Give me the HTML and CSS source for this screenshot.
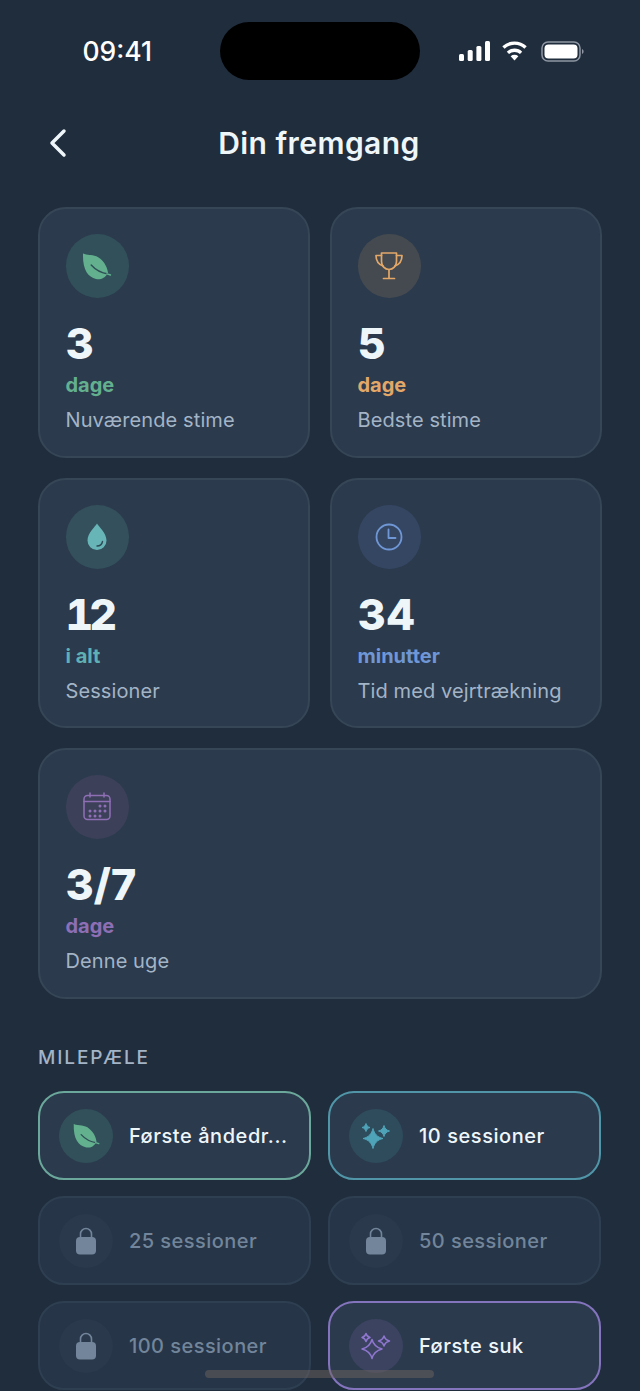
FILE: index.html
```html
<!DOCTYPE html>
<html lang="da">
<head>
  <meta charset="UTF-8" />
  <meta name="viewport" content="width=device-width, initial-scale=1.0"/>
  <title>Din fremgang</title>
  <link rel="stylesheet" href="styles.css">
</head>
<body>
  <div class="screen">
    <div class="status-bar">
      <span class="time">09:41</span>
      <div class="island"></div>
      <div class="status-icons">
        <svg class="signal" width="31" height="20" viewBox="0 0 31 20"><rect x="0" y="13" width="5" height="7" rx="1.5"/><rect x="8.700" y="9" width="5" height="11" rx="1.5"/><rect x="17.400" y="5" width="5" height="15" rx="1.5"/><rect x="26" y="0" width="5" height="20" rx="1.5"/></svg>
        <svg class="wifi" width="25" height="20" viewBox="0 0 26 20"><path d="M13 20l-4-4.600a6 6 0 0 1 8 0z"/><path d="M13 7.500c3.200 0 6 1.200 8 3.200l-2.300 2.500a8.300 8.300 0 0 0-11.400 0L5 10.700c2-2 4.800-3.200 8-3.200z"/><path d="M13 0c4.900 0 9.400 1.900 12.700 5.100l-2.400 2.600A15 15 0 0 0 13 3.500 15 15 0 0 0 2.700 7.700L.3 5.100A18.300 18.300 0 0 1 13 0z"/></svg>
        <svg width="43" height="21" viewBox="0 0 43 21"><rect x="1" y="1" width="38" height="19" rx="6" fill="none" stroke="#8e97a3" stroke-width="1.500"/><rect x="3.500" y="3.500" width="33" height="14" rx="4"/><path d="M41 8v5c1-.4 1.600-1.400 1.600-2.500S42 8.400 41 8z" fill="#8e97a3"/></svg>
      </div>
    </div>

    <header class="top-bar">
      <svg class="back" width="20" height="30" viewBox="0 0 20 30"><path d="M16 3L4 15l12 12" fill="none" stroke="#eef6fa" stroke-width="3.500" stroke-linecap="round" stroke-linejoin="round"/></svg>
      <h1>Din fremgang</h1>
    </header>

    <section class="stats">
      <div class="card">
        <div class="circle c-green">
          <svg width="34" height="34" viewBox="0 0 34 34"><path d="M3 4.500C9 7 15 5 20 9.500c5 4 7.500 9.500 8 14.500-3 5.500-8 7-12 6C8 28 2.500 21 3 4.500z" fill="#63b08f"/><path d="M11.200 16c4 4.500 10 8 17 9" fill="none" stroke="#2f4f56" stroke-width="1.400" stroke-linecap="round"/><path d="M27 24.800l3.500 1.200" stroke="#63b08f" stroke-width="1.400" stroke-linecap="round"/></svg>
        </div>
        <div class="num">3</div>
        <div class="unit green">dage</div>
        <div class="label">Nuværende stime</div>
      </div>
      <div class="card">
        <div class="circle c-orange">
          <svg width="30" height="30" viewBox="0 0 30 30" fill="none" stroke="#e3a868" stroke-width="1.700" stroke-linejoin="round" stroke-linecap="round"><path d="M7.500 2h15v8.500c0 4.500-3.300 8-7.500 8s-7.500-3.500-7.500-8z"/><path d="M7.500 4.500H2c0 5 1.800 8.500 7 10.500M22.500 4.500H28c0 5-1.800 8.500-7 10.500"/><path d="M15 18.500V27M9.500 27.500h11"/></svg>
        </div>
        <div class="num">5</div>
        <div class="unit orange">dage</div>
        <div class="label">Bedste stime</div>
      </div>
      <div class="card">
        <div class="circle c-teal">
          <svg width="24" height="30" viewBox="0 0 24 30"><path d="M12 1.500c1.500 3 9.500 9.500 9.500 17a9.500 9.500 0 0 1-19 0c0-7.500 8-14 9.500-17z" fill="#68b5b8"/><path d="M12 24c3 0 5-1.800 5.500-4.500" fill="none" stroke="#2c4a55" stroke-width="1.400" stroke-linecap="round"/></svg>
        </div>
        <div class="num num-tab">12</div>
        <div class="unit teal">i alt</div>
        <div class="label">Sessioner</div>
      </div>
      <div class="card">
        <div class="circle c-blue">
          <svg width="30" height="30" viewBox="0 0 30 30" fill="none" stroke="#6f97d6" stroke-width="1.800" stroke-linecap="round" stroke-linejoin="round"><circle cx="15" cy="15" r="12.500"/><path d="M14.500 7.500V16h7"/></svg>
        </div>
        <div class="num">34</div>
        <div class="unit blue">minutter</div>
        <div class="label">Tid med vejrtrækning</div>
      </div>
      <div class="card wide">
        <div class="circle c-purple">
          <svg width="30" height="30" viewBox="0 0 30 30" fill="none" stroke="#8e6fb5" stroke-width="1.500" stroke-linecap="round"><rect x="2" y="3.500" width="26" height="24" rx="3.500"/><path d="M2 9.500h26M8 1v4M22 1v4"/><g fill="#8e6fb5" stroke="none"><circle cx="18" cy="14" r="1.500"/><circle cx="23" cy="14" r="1.500"/><circle cx="8" cy="19" r="1.500"/><circle cx="13" cy="19" r="1.500"/><circle cx="18" cy="19" r="1.500"/><circle cx="23" cy="19" r="1.500"/><circle cx="8" cy="24" r="1.500"/><circle cx="13" cy="24" r="1.500"/><circle cx="18" cy="24" r="1.500"/></g></svg>
        </div>
        <div class="num">3/7</div>
        <div class="unit purple">dage</div>
        <div class="label">Denne uge</div>
      </div>
    </section>

    <h2 class="section-title">MILEPÆLE</h2>

    <section class="milestones">
      <div class="mile done-green">
        <div class="mile-icon c-green">
          <svg width="31" height="31" viewBox="0 0 34 34"><path d="M3 4.500C9 7 15 5 20 9.500c5 4 7.500 9.500 8 14.500-3 5.500-8 7-12 6C8 28 2.500 21 3 4.500z" fill="#63b08f"/><path d="M11.200 16c4 4.500 10 8 17 9" fill="none" stroke="#2f4f56" stroke-width="1.400" stroke-linecap="round"/><path d="M27 24.800l3.500 1.200" stroke="#63b08f" stroke-width="1.400" stroke-linecap="round"/></svg>
        </div>
        <span class="mile-text">Første åndedr...</span>
      </div>
      <div class="mile done-teal">
        <div class="mile-icon c-cyan">
          <svg width="32" height="32" viewBox="0 0 32 32" fill="#4fa3b8" stroke="#4fa3b8" stroke-width="1" stroke-linejoin="round"><path d="M13 8.500c1.200 5 4.200 8.800 10 10-5.800 1.200-8.800 5-10 10-1.200-5-4.200-8.800-10-10 5.800-1.200 8.800-5 10-10z"/><path d="M6 3.500c.6 2.200 1.800 3.400 4 4-2.200.6-3.400 1.800-4 4-.6-2.200-1.800-3.400-4-4 2.200-.6 3.400-1.800 4-4z"/><path d="M24 5.500c.8 2.800 2.200 4.700 5.500 5.500-3.300.8-4.700 2.700-5.500 5.500-.8-2.800-2.200-4.700-5.500-5.500 3.300-.8 4.700-2.700 5.500-5.500z"/></svg>
        </div>
        <span class="mile-text">10 sessioner</span>
      </div>
      <div class="mile locked">
        <div class="mile-icon">
          <svg width="22" height="28" viewBox="0 0 22 28"><path d="M5.500 11V7a5.500 5.500 0 0 1 11 0v4" fill="none" stroke="#72859a" stroke-width="1.600"/><rect x="1" y="10" width="20" height="17.500" rx="4" fill="#72859a"/></svg>
        </div>
        <span class="mile-text">25 sessioner</span>
      </div>
      <div class="mile locked">
        <div class="mile-icon">
          <svg width="22" height="28" viewBox="0 0 22 28"><path d="M5.500 11V7a5.500 5.500 0 0 1 11 0v4" fill="none" stroke="#72859a" stroke-width="1.600"/><rect x="1" y="10" width="20" height="17.500" rx="4" fill="#72859a"/></svg>
        </div>
        <span class="mile-text">50 sessioner</span>
      </div>
      <div class="mile locked">
        <div class="mile-icon">
          <svg width="22" height="28" viewBox="0 0 22 28"><path d="M5.500 11V7a5.500 5.500 0 0 1 11 0v4" fill="none" stroke="#72859a" stroke-width="1.600"/><rect x="1" y="10" width="20" height="17.500" rx="4" fill="#72859a"/></svg>
        </div>
        <span class="mile-text">100 sessioner</span>
      </div>
      <div class="mile done-purple">
        <div class="mile-icon c-violet">
          <svg width="32" height="32" viewBox="0 0 32 32" fill="none" stroke="#8f76cf" stroke-width="1.500" stroke-linejoin="round"><path d="M12 9.500c1.200 4.700 4.200 8 10 9.500-5.800 1.500-8.800 4.800-10 9.500-1.200-4.700-4.200-8-10-9.500 5.800-1.500 8.800-4.800 10-9.500z"/><path d="M6 3.500c.6 2.200 1.800 3.400 4 4-2.200.6-3.400 1.800-4 4-.6-2.200-1.800-3.400-4-4 2.200-.6 3.400-1.800 4-4z"/><path d="M24 6c.8 2.600 2.200 4.200 5.500 5-3.300.8-4.700 2.400-5.500 5-.8-2.600-2.200-4.200-5.500-5 3.300-.8 4.700-2.400 5.500-5z"/></svg>
        </div>
        <span class="mile-text">Første suk</span>
      </div>
    </section>

    <div class="home-bar"></div>
  </div>
</body>
</html>
```

FILE: styles.css
```css
html, body {
  margin: 0;
  background-color: #202d3d;
}
.screen {
  position: relative;
  height: 1391px;
  overflow: hidden;
  padding: 22px 38px 0;
  box-sizing: border-box;
  font-family: Inter, "Liberation Sans", sans-serif;
  color: #eef6fa;
}
.status-bar {
  display: grid;
  grid-template-columns: 1fr 200px 1fr;
  align-items: center;
  height: 58px;
}
.time {
  font-size: 26.5px;
  font-weight: 500;
  color: #ffffff;
  padding-left: 44.5px;
}
.island {
  height: 58px;
  background-color: #000000;
  border-radius: 29px;
}
.status-icons {
  display: flex;
  align-items: center;
  justify-content: flex-end;
  gap: 14px;
  padding-right: 18px;
  fill: #ffffff;
}
.signal {
  margin-right: -2px;
}
.top-bar {
  position: relative;
  height: 60px;
  margin-top: 33px;
  display: flex;
  align-items: center;
  justify-content: center;
}
.top-bar h1 {
  margin: 0 2px 0 0;
  font-size: 30px;
  font-weight: 600;
  line-height: 60px;
  letter-spacing: 0.45px;
  color: #eef6fa;
}
.back {
  position: absolute;
  left: 10px;
  top: 15px;
}
.stats {
  display: grid;
  grid-template-columns: 272px 271.5px;
  grid-auto-rows: 250.5px;
  gap: 20px;
  margin-top: 34px;
}
.card {
  box-sizing: border-box;
  padding: 25px 25.5px;
  background-color: #2b3a4d;
  border: 2px solid #364657;
  border-radius: 28px;
}
.wide {
  grid-column: span 2;
}
.circle {
  width: 63.5px;
  height: 64px;
  border-radius: 50%;
  display: flex;
  align-items: center;
  justify-content: center;
}
.c-green { background-color: #31505a; }
.c-orange { background-color: #454a50; }
.c-teal { background-color: #33505c; }
.c-blue { background-color: #354663; }
.c-purple { background-color: #3c4059; }
.c-cyan { background-color: #2e4c5c; }
.c-violet { background-color: #3b4360; }
.num {
  margin-top: 20px;
  font-size: 43px;
  font-weight: 800;
  line-height: 50px;
  color: #eef6fa;
}
.num-tab {
  font-variant-numeric: tabular-nums;
  letter-spacing: -4px;
}
.unit {
  font-size: 20px;
  font-weight: 700;
  line-height: 26px;
  margin-top: 4px;
}
.green { color: #63b08f; }
.orange { color: #e3a868; }
.teal { color: #5fb0b2; }
.blue { color: #6f97d6; }
.purple { color: #8e6fb5; }
.label {
  font-size: 20px;
  line-height: 26px;
  letter-spacing: 0.1px;
  margin-top: 9px;
  color: #a3b4c6;
}
.section-title {
  margin: 47px 0 0;
  font-size: 19px;
  font-weight: 500;
  line-height: 24px;
  letter-spacing: 1.9px;
  color: #a3b4c6;
}
.milestones {
  display: grid;
  grid-template-columns: 273px 273px;
  grid-auto-rows: 89px;
  gap: 16px 17px;
  margin-top: 21.5px;
}
.mile {
  box-sizing: border-box;
  display: flex;
  align-items: center;
  gap: 16px;
  padding: 0 19px;
  background-color: #2b3a4d;
  border: 2px solid transparent;
  border-radius: 26px;
}
.done-green { border-color: #6ba89b; }
.done-teal { border-color: #5096a8; }
.done-purple { border-color: #8474bd; }
.locked {
  background-color: #263548;
  border-color: #2f3f52;
}
.mile-icon {
  flex: none;
  width: 54px;
  height: 54px;
  border-radius: 50%;
  display: flex;
  align-items: center;
  justify-content: center;
}
.locked .mile-icon {
  background-color: #2a394c;
}
.mile-text {
  font-size: 20px;
  font-weight: 500;
  letter-spacing: 0.55px;
  color: #eef6fa;
  white-space: nowrap;
}
.locked .mile-text {
  color: #72859a;
  letter-spacing: 0.45px;
}
.home-bar {
  position: absolute;
  left: 205px;
  bottom: 13px;
  width: 229px;
  height: 8px;
  border-radius: 4px;
  background-color: rgba(110, 100, 95, 0.5);
}
```
